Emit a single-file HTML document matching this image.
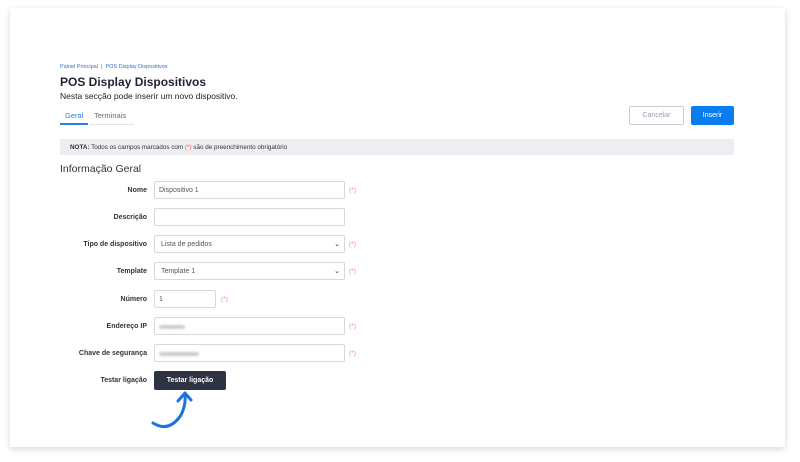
<!DOCTYPE html>
<html><head><meta charset="utf-8"><style>
*{box-sizing:border-box;margin:0;padding:0}
body{width:800px;height:462px;background:#fff;font-family:"Liberation Sans",sans-serif;position:relative;overflow:hidden;color:#222}
.card{position:absolute;left:10px;top:8px;width:775px;height:439px;background:#fff;box-shadow:0 2px 6px rgba(40,40,80,.18)}
.a{position:absolute;white-space:nowrap}
.lbl{position:absolute;right:653px;font-size:7px;font-weight:bold;color:#333}
.in{position:absolute;left:154px;width:191px;height:18px;border:1px solid #d6d8dc;border-radius:2px;background:#fff;font-size:7px;color:#555;padding:5px 4px}
.req{position:absolute;left:349px;font-size:6.5px;color:#e88}
.chev{position:absolute;right:4px;top:4px;font-size:7px;color:#333}
.blur{display:inline-block;height:4px;background:#ccc;border-radius:2px;filter:blur(1px);margin-top:2px}
</style></head><body>
<div class="card"></div>
<div class="a" style="left:60px;top:64px;font-size:5.5px;color:#3a6fb5">Painel Principal &nbsp;|&nbsp; POS Display Dispositivos</div>
<div class="a" style="left:60px;top:75px;font-size:12px;font-weight:bold;color:#1f2330">POS Display Dispositivos</div>
<div class="a" style="left:60px;top:91px;font-size:8.5px;color:#222">Nesta secção pode inserir um novo dispositivo.</div>
<div class="a" style="left:65px;top:111px;font-size:7.5px;color:#2a7be4">Geral</div>
<div class="a" style="left:94px;top:111px;font-size:7.5px;color:#666">Terminais</div>
<div class="a" style="left:60px;top:123px;width:28px;height:2px;background:#2a7be4"></div>
<div class="a" style="left:90px;top:124px;width:44px;height:1px;background:#e3e4e8"></div>
<div class="a" style="left:629px;top:106px;width:55px;height:19px;border:1px solid #c9ccd3;border-radius:2px;font-size:7px;color:#9aa0aa;text-align:center;line-height:17px">Cancelar</div>
<div class="a" style="left:691px;top:106px;width:43px;height:19px;background:#0a7ef0;border-radius:2px;font-size:7px;color:#fff;text-align:center;line-height:19px">Inserir</div>
<div class="a" style="left:60px;top:139px;width:674px;height:16px;background:#eceef2;font-size:6.3px;color:#333;padding:5px 10px"><b>NOTA:</b> Todos os campos marcados com <span style="color:#e55">(*)</span> são de preenchimento obrigatório</div>
<div class="a" style="left:60px;top:163px;font-size:10.5px;color:#333">Informação Geral</div>

<div class="lbl" style="top:187px">Nome</div><div class="in" style="top:181px">Dispositivo 1</div><div class="req" style="top:187px">(*)</div>
<div class="lbl" style="top:214px">Descrição</div><div class="in" style="top:208px"></div>
<div class="lbl" style="top:241px">Tipo de dispositivo</div><div class="in" style="top:235px">&nbsp;Lista de pedidos<span class="chev">⌄</span></div><div class="req" style="top:241px">(*)</div>
<div class="lbl" style="top:268px">Template</div><div class="in" style="top:262px">&nbsp;Template 1<span class="chev">⌄</span></div><div class="req" style="top:268px">(*)</div>
<div class="lbl" style="top:296px">Número</div><div class="in" style="top:290px;width:62px">1</div><div class="req" style="top:296px;left:221px">(*)</div>
<div class="lbl" style="top:323px">Endereço IP</div><div class="in" style="top:317px"><span class="blur" style="width:26px"></span></div><div class="req" style="top:323px">(*)</div>
<div class="lbl" style="top:350px">Chave de segurança</div><div class="in" style="top:344px"><span class="blur" style="width:40px"></span></div><div class="req" style="top:350px">(*)</div>
<div class="lbl" style="top:377px">Testar ligação</div>
<div class="a" style="left:154px;top:371px;width:72px;height:19px;background:#2d3342;border-radius:2px;font-size:7px;font-weight:bold;color:#fff;text-align:center;line-height:19px">Testar ligação</div>
<svg class="a" style="left:145px;top:385px" width="60" height="50" viewBox="0 0 60 50"><path d="M8 38 Q24 48 36 30 Q41 20 40 10" fill="none" stroke="#1a73e0" stroke-width="3" stroke-linecap="round"/><path d="M33 16 L40 8 L46 15" fill="none" stroke="#1a73e0" stroke-width="3" stroke-linecap="round" stroke-linejoin="round"/></svg>
</body></html>
